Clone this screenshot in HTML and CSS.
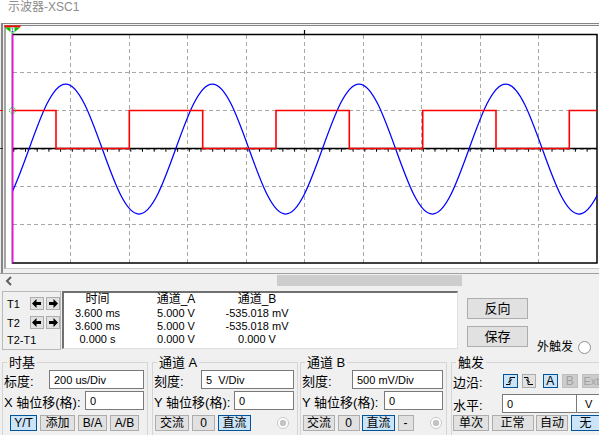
FILE: index.html
```html
<!DOCTYPE html>
<html lang="zh">
<head>
<meta charset="utf-8">
<title>示波器-XSC1</title>
<link rel="stylesheet" href="styles.css">
</head>
<body>
<div class="title">示波器-XSC1</div>

<div class="scope">
  <div class="screen">
    <svg class="plot" viewBox="6 26 593 242" xmlns="http://www.w3.org/2000/svg">
      <defs><clipPath id="pc"><rect x="12" y="34" width="585" height="229"/></clipPath></defs>
      <g stroke="#a8a8a8" stroke-width="1" stroke-dasharray="4 3" fill="none">
        <path d="M70.5 35V263M129.5 35V263M187.5 35V263M246.5 35V263M304.5 35V263M363.5 35V263M421.5 35V263M480.5 35V263M538.5 35V263"/>
        <path d="M13 72.5H597M13 110.5H597M13 149.5H597M13 186.5H597M13 224.5H597"/>
      </g>
      <path d="M12 148.5H597" stroke="#000" stroke-width="1.3" fill="none"/>
      <path d="M12 150.3H597" stroke="#000" stroke-width="3" stroke-dasharray="1 10.7" stroke-dashoffset="-1.3" fill="none"/>
      <rect x="12.5" y="34.5" width="584.5" height="228.5" fill="none" stroke="#000" stroke-width="1.5"/>
      <path d="M304.5 30V35" stroke="#000" stroke-width="1.2"/>
      <path clip-path="url(#pc)" fill="none" stroke="#0000ff" stroke-width="1.25" d="M-7.667 214
        c13.27 0 24.709 -31.7 36.667 -65 c11.958 -33.3 23.397 -65 36.667 -65 c13.27 0 24.709 31.7 36.667 65 c11.958 33.3 23.397 65 36.667 65
        c13.27 0 24.709 -31.7 36.667 -65 c11.958 -33.3 23.397 -65 36.667 -65 c13.27 0 24.709 31.7 36.667 65 c11.958 33.3 23.397 65 36.667 65
        c13.27 0 24.709 -31.7 36.667 -65 c11.958 -33.3 23.397 -65 36.667 -65 c13.27 0 24.709 31.7 36.667 65 c11.958 33.3 23.397 65 36.667 65
        c13.27 0 24.709 -31.7 36.667 -65 c11.958 -33.3 23.397 -65 36.667 -65 c13.27 0 24.709 31.7 36.667 65 c11.958 33.3 23.397 65 36.667 65
        c13.27 0 24.709 -31.7 36.667 -65 c11.958 -33.3 23.397 -65 36.667 -65 c13.27 0 24.709 31.7 36.667 65 c11.958 33.3 23.397 65 36.667 65"/>
      <path clip-path="url(#pc)" fill="none" stroke="#ff0000" stroke-width="1.6" d="M12 110.5H56V148.5H129.3V110.5H202.7V148.5H276V110.5H349.3V148.5H422.7V110.5H496V148.5H569.3V110.5H598"/>
      <path d="M12.5 33V263" stroke="#ff00ff" stroke-width="1.3"/>
      <polygon points="4,25.5 21,25.5 20,27.5 5,27.5" fill="#ff0000"/>
      <polygon points="5,27.5 20,27.5 12.5,34" fill="#00c000"/>
      <rect x="10.5" y="27.5" width="4" height="5" fill="#fff"/>
      <text x="12.5" y="32" font-size="5" text-anchor="middle" fill="#0000a0" font-family="Liberation Sans">1</text>
      <circle cx="12.5" cy="110.5" r="3" fill="none" stroke="#00c000" stroke-width="1" stroke-dasharray="1.5 1"/>
      <path d="M0 110.5H3" stroke="#ff0000"/>
      <path d="M0 148.5H3" stroke="#333"/>
    </svg>
  </div>
</div>

<div class="hscroll">
  <svg class="larr" viewBox="0 0 8 10"><path d="M6 1L2 5L6 9" fill="none" stroke="#606060" stroke-width="2"/></svg>
  <div class="thumb"></div>
</div>

<div class="readrow">
  <div class="cursors">
    <div class="crow">
      <span>T1</span>
      <div class="abtn"><svg viewBox="0 0 9 9"><polygon points="0,4.5 4.5,0 4.5,3 9,3 9,6 4.5,6 4.5,9" fill="#000"/></svg></div>
      <div class="abtn"><svg viewBox="0 0 9 9"><polygon points="9,4.5 4.5,0 4.5,3 0,3 0,6 4.5,6 4.5,9" fill="#000"/></svg></div>
    </div>
    <div class="crow">
      <span>T2</span>
      <div class="abtn"><svg viewBox="0 0 9 9"><polygon points="0,4.5 4.5,0 4.5,3 9,3 9,6 4.5,6 4.5,9" fill="#000"/></svg></div>
      <div class="abtn"><svg viewBox="0 0 9 9"><polygon points="9,4.5 4.5,0 4.5,3 0,3 0,6 4.5,6 4.5,9" fill="#000"/></svg></div>
    </div>
    <div class="cdiff">T2-T1</div>
  </div>

  <div class="readout">
    <div class="rh">时间</div><div class="rh">通道_A</div><div class="rh">通道_B</div>
    <div>3.600 ms</div><div>5.000 V</div><div>-535.018 mV</div>
    <div>3.600 ms</div><div>5.000 V</div><div>-535.018 mV</div>
    <div>0.000 s</div><div>0.000 V</div><div>0.000 V</div>
  </div>

  <div class="side">
    <div class="sbtns">
      <div class="btn big">反向</div>
      <div class="btn big">保存</div>
    </div>
    <div class="ext"><span>外触发</span><span class="radio"></span></div>
  </div>
</div>

<div class="controls">
  <fieldset class="grp g1">
    <legend>时基</legend>
    <div class="row"><span class="lbl">标度:</span><div class="inp ia">200 us/Div</div></div>
    <div class="row"><span class="lbl">X 轴位移(格):</span><div class="inp ib">0</div></div>
    <div class="brow">
      <div class="btn on">Y/T</div><div class="btn">添加</div><div class="btn">B/A</div><div class="btn">A/B</div>
    </div>
  </fieldset>

  <fieldset class="grp g2">
    <legend>通道 A</legend>
    <div class="row"><span class="lbl">刻度:</span><div class="inp ia">5&nbsp;&nbsp;V/Div</div></div>
    <div class="row"><span class="lbl">Y 轴位移(格):</span><div class="inp ib">0</div></div>
    <div class="brow">
      <div class="btn b1">交流</div><div class="btn b2">0</div><div class="btn b3 on">直流</div>
      <span class="radio dis"></span>
    </div>
  </fieldset>

  <fieldset class="grp g3">
    <legend>通道 B</legend>
    <div class="row"><span class="lbl">刻度:</span><div class="inp ia">500 mV/Div</div></div>
    <div class="row"><span class="lbl">Y 轴位移(格):</span><div class="inp ib">0</div></div>
    <div class="brow">
      <div class="btn b1">交流</div><div class="btn b2">0</div><div class="btn b3 on">直流</div><div class="btn b4">-</div>
      <span class="radio dis"></span>
    </div>
  </fieldset>

  <fieldset class="grp g4">
    <legend>触发</legend>
    <div class="row r1"><span class="lbl">边沿:</span>
      <div class="edges">
        <div class="btn eb e1 on"><svg viewBox="0 0 11 10"><path d="M1 8.5H5V1.5H10" fill="none" stroke="#000" stroke-width="1"/><path d="M3 6.5L7 3.5" stroke="#000" stroke-width="1"/></svg></div>
        <div class="btn eb e2"><svg viewBox="0 0 11 10"><path d="M1 1.5H5V8.5H10" fill="none" stroke="#000" stroke-width="1"/><path d="M3 3.5L7 6.5" stroke="#000" stroke-width="1"/></svg></div>
        <div class="btn eb e3 on">A</div>
        <div class="btn eb e4 off">B</div>
        <div class="btn eb e5 off">Ext</div>
      </div>
    </div>
    <div class="row r2"><span class="lbl">水平:</span><div class="inp ilev">0</div><div class="unit">V</div></div>
    <div class="brow">
      <div class="btn t1">单次</div><div class="btn t2">正常</div><div class="btn t3">自动</div><div class="btn t4 on">无</div>
    </div>
  </fieldset>
</div>
</body>
</html>
```

FILE: styles.css
```css
html, body {
  margin: 0;
  padding: 0;
  overflow: hidden;
}
body {
  width: 599px;
  height: 435px;
  background: #f0f0f0;
  font-family: "Liberation Sans", "Noto Sans CJK SC", sans-serif;
  color: #000;
}

.title {
  height: 23px;
  box-sizing: border-box;
  background: #fff;
  color: #8c8c8c;
  font-size: 12px;
  line-height: 14px;
  padding-left: 8px;
}

.scope {
  margin-left: 1px;
  border-left: 2px solid #858585;
  border-top: 1px solid #858585;
  padding: 1px 0 4px 1px;
  background: #f0f0f0;
}
.screen {
  height: 242px;
  background: #fff;
  border-top: 1px solid #858585;
  border-left: 2px solid #a5a5a5;
  border-bottom: 1px solid #c8c8c8;
}
.plot {
  display: block;
  width: 593px;
  height: 242px;
  overflow: visible;
}

.hscroll {
  height: 13px;
  border-top: 1px solid #a0a0a0;
  display: flex;
  align-items: center;
}
.larr {
  width: 8px;
  height: 10px;
  margin-left: 5px;
}
.thumb {
  width: 185px;
  height: 11px;
  background: #cdcdcd;
  margin-left: 264px;
}

.readrow {
  display: flex;
  height: 59px;
  margin-top: 4px;
}
.cursors {
  margin-left: 2px;
  width: 59px;
  box-sizing: border-box;
  border: 1px solid #b9b9b9;
  padding: 5px 0 0 4px;
  font-size: 11px;
}
.crow {
  display: grid;
  grid-template-columns: 20px 14px 14px;
  column-gap: 2.5px;
  align-items: center;
  height: 13px;
}
.crow + .crow {
  margin-top: 6px;
}
.cdiff {
  margin-top: 4px;
  line-height: 14px;
}
.abtn {
  height: 13px;
  box-sizing: border-box;
  background: #e1e1e1;
  border: 1px solid #adadad;
  display: flex;
  align-items: center;
  justify-content: center;
}
.abtn svg {
  width: 9px;
  height: 9px;
}

.readout {
  margin-left: 1px;
  width: 396px;
  height: 58px;
  box-sizing: border-box;
  background: #fff;
  border-top: 2px solid #707070;
  border-left: 2px solid #707070;
  border-right: 1px solid #dedede;
  border-bottom: 1px solid #dedede;
  display: grid;
  grid-template-columns: 67px 90px 72px;
  grid-template-rows: 13.5px 13.35px 13.35px 13.35px;
  align-content: start;
  text-align: center;
  font-size: 11px;
  line-height: 13.35px;
  white-space: nowrap;
}
.readout .rh {
  font-size: 12px;
  line-height: 13.5px;
}

.side {
  display: flex;
}
.sbtns {
  margin-left: 9px;
  padding-top: 7px;
  display: flex;
  flex-direction: column;
  gap: 7px;
}
.btn {
  height: 16px;
  box-sizing: border-box;
  background: #e1e1e1;
  border: 1px solid #adadad;
  font-size: 12px;
  line-height: 14px;
  display: flex;
  align-items: center;
  justify-content: center;
  flex-shrink: 0;
  white-space: nowrap;
}
.btn.big {
  width: 61px;
  height: 21px;
  font-size: 13px;
}
.btn.on {
  background: #cce4f7;
  border-color: #005499;
}
.btn.off {
  background: #cccccc;
  border-color: #bfbfbf;
  color: #a0a0a0;
}
.ext {
  align-self: flex-end;
  margin-left: 9px;
  margin-bottom: -4px;
  display: flex;
  align-items: center;
  font-size: 12px;
  line-height: 13px;
}
.radio {
  display: block;
  width: 13px;
  height: 13px;
  box-sizing: border-box;
  border: 1px solid #8f8f8f;
  border-radius: 50%;
  background: #fff;
  margin-left: 5px;
  flex-shrink: 0;
}
.radio.dis {
  width: 12px;
  height: 12px;
  border-color: #c7c7c7;
  background: radial-gradient(circle, #c4c4c4 0 3px, #fff 3.6px);
  margin-left: auto;
}

.controls {
  display: flex;
  align-items: flex-start;
  margin-top: 5px;
}
.grp {
  margin: 0;
  border: 1px solid #d5d5d5;
  padding: 0 3px 0 1px;
  box-sizing: border-box;
  min-width: 0;
  height: 90px;
  flex-shrink: 0;
}
.grp legend {
  font-size: 13px;
  line-height: 15px;
  padding: 0 2px;
  margin-left: 3px;
}
.g1 { margin-left: 2px; width: 146px; }
.g2 { margin-left: 4px; width: 146px; }
.g3 { margin-left: 2px; width: 147px; }
.g4 { margin-left: 4px; width: 162px; }

.row {
  display: flex;
  align-items: center;
  justify-content: space-between;
  height: 19px;
}
.row + .row {
  margin-top: 2px;
}
.lbl {
  font-size: 13px;
  line-height: 15px;
  margin-top: 3px;
  white-space: nowrap;
}
.inp {
  height: 19px;
  box-sizing: border-box;
  border: 1px solid #7a7a7a;
  background: #fff;
  font-size: 11px;
  padding-left: 4px;
  display: flex;
  align-items: center;
  white-space: nowrap;
}
.g1 .ia { width: 95px; }
.g1 .ib { width: 59px; }
.g2 .ia { width: 93px; }
.g2 .ib { width: 60px; }
.g3 .ia { width: 91px; }
.g3 .ib { width: 59px; }

.brow {
  display: flex;
  align-items: center;
  height: 16px;
  margin-top: 5px;
}
.g1 .brow {
  padding-left: 6px;
  gap: 3px;
}
.g1 .brow .btn:nth-child(1) { width: 27px; }
.g1 .brow .btn:nth-child(2) { width: 35px; }
.g1 .brow .btn:nth-child(3) { width: 29px; }
.g1 .brow .btn:nth-child(4) { width: 29px; }

.g2 .brow {
  padding-left: 1px;
  gap: 3px;
}
.g2 .b1 { width: 34px; }
.g2 .b2 { width: 23px; }
.g2 .b3 { width: 33px; }
.g2 .radio.dis { margin-right: 5px; }

.g3 .brow {
  padding-left: 1px;
  gap: 2.5px;
}
.g3 .b1 { width: 32px; }
.g3 .b2 { width: 22px; }
.g3 .b3 { width: 33px; }
.g3 .b4 { width: 16px; }
.g3 .radio.dis { margin-right: 1px; }

.g4 .row {
  justify-content: flex-start;
}
.g4 .r1 {
  height: 22px;
}
.g4 .lbl {
  width: 49px;
}
.edges {
  display: flex;
  gap: 3.5px;
  margin-left: 1px;
}
.eb {
  height: 14px;
  font-size: 12px;
}
.eb svg {
  width: 11px;
  height: 10px;
}
.e1 { width: 15px; }
.e2 { width: 14.5px; }
.e3 { width: 15.5px; margin-left: 3px; }
.e4 { width: 16.5px; }
.e5 {
  width: 27px;
  justify-content: flex-start;
  padding-left: 1px;
  font-size: 11px;
}
.ilev {
  width: 75px;
}
.unit {
  height: 19px;
  width: 32px;
  box-sizing: border-box;
  border: 1px solid #7a7a7a;
  border-left: 0;
  background: #fff;
  font-size: 11px;
  padding-left: 8px;
  display: flex;
  align-items: center;
}
.g4 .brow {
  margin-top: 1.5px;
  gap: 2.5px;
}
.g4 .t1 { width: 36px; }
.g4 .t2 { width: 42px; }
.g4 .t3 { width: 32px; }
.g4 .t4 { width: 30px; }
```
